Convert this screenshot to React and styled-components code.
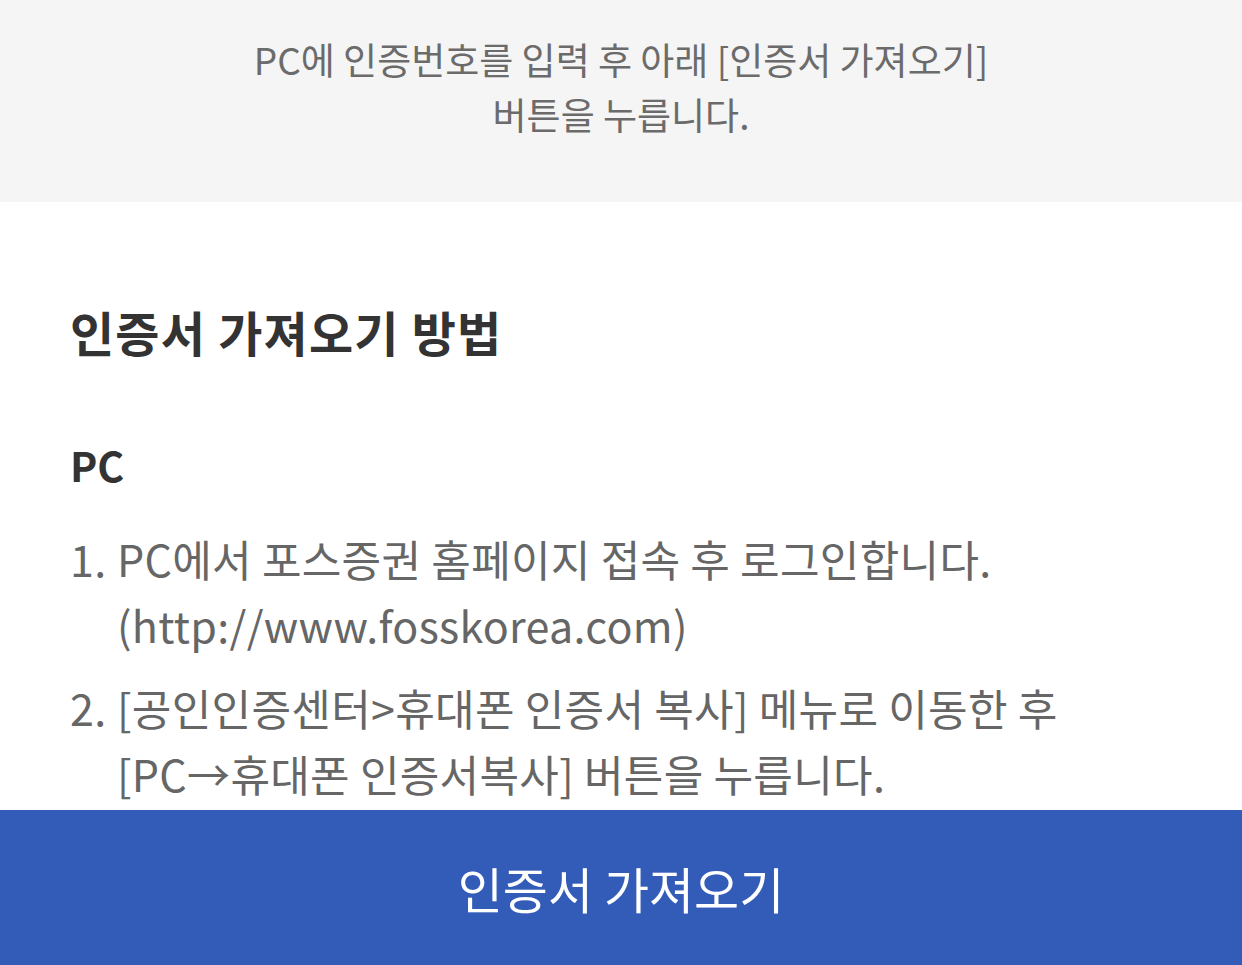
import React from "react";
import styled, { createGlobalStyle } from "styled-components";

const GlobalStyle = createGlobalStyle`
  html, body {
    margin: 0;
    padding: 0;
    background: #ffffff;
  }
  body {
    font-family: "Noto Sans CJK KR", "Noto Sans", sans-serif;
  }
`;

const Page = styled.div`
  display: flex;
  flex-direction: column;
  height: 100vh;
  overflow: hidden;
`;

const Notice = styled.div`
  flex-shrink: 0;
  background: #f5f5f5;
  padding: 32px 0 60px;
  text-align: center;
  font-size: 37px;
  line-height: 55px;
  color: #6b6b6b;
`;

const Content = styled.div`
  flex: 1;
  overflow: hidden;
  padding: 99px 70px 0;
`;

const Title = styled.h2`
  margin: 0;
  font-size: 48px;
  line-height: 60px;
  font-weight: 700;
  letter-spacing: 1.2px;
  color: #333333;
`;

const SubTitle = styled.h3`
  margin: 78px 0 0;
  font-size: 41px;
  line-height: 50px;
  font-weight: 700;
  color: #333333;
`;

const Steps = styled.ol`
  list-style: none;
  margin: 36px 0 0;
  padding: 0;
  display: flex;
  flex-direction: column;
  gap: 17px;
`;

const Step = styled.li`
  display: flex;
  font-size: 43px;
  line-height: 66px;
  letter-spacing: 0.3px;
  color: #666666;
`;

const StepNum = styled.span`
  flex-shrink: 0;
  width: 47px;
`;

const StepText = styled.span`
  flex: 1;
`;

const BottomButton = styled.button`
  flex-shrink: 0;
  height: 155px;
  border: 0;
  background: #335bb8;
  color: #ffffff;
  font-family: inherit;
  font-size: 49px;
  font-weight: 400;
  cursor: pointer;
`;

const steps = [
  {
    num: "1.",
    text: (
      <>
        PC에서 포스증권 홈페이지 접속 후 로그인합니다.
        <br />
        (http://www.fosskorea.com)
      </>
    )
  },
  {
    num: "2.",
    text: (
      <>
        [공인인증센터&gt;휴대폰 인증서 복사] 메뉴로 이동한 후
        <br />
        [PC→휴대폰 인증서복사] 버튼을 누릅니다.
      </>
    )
  }
];

const App = () => (
  <Page>
    <GlobalStyle />
    <Notice>
      PC에 인증번호를 입력 후 아래 [인증서 가져오기]
      <br />
      버튼을 누릅니다.
    </Notice>
    <Content>
      <Title>인증서 가져오기 방법</Title>
      <SubTitle>PC</SubTitle>
      <Steps>
        {steps.map(step => (
          <Step key={step.num}>
            <StepNum>{step.num}</StepNum>
            <StepText>{step.text}</StepText>
          </Step>
        ))}
      </Steps>
    </Content>
    <BottomButton>인증서 가져오기</BottomButton>
  </Page>
);

export default App;
